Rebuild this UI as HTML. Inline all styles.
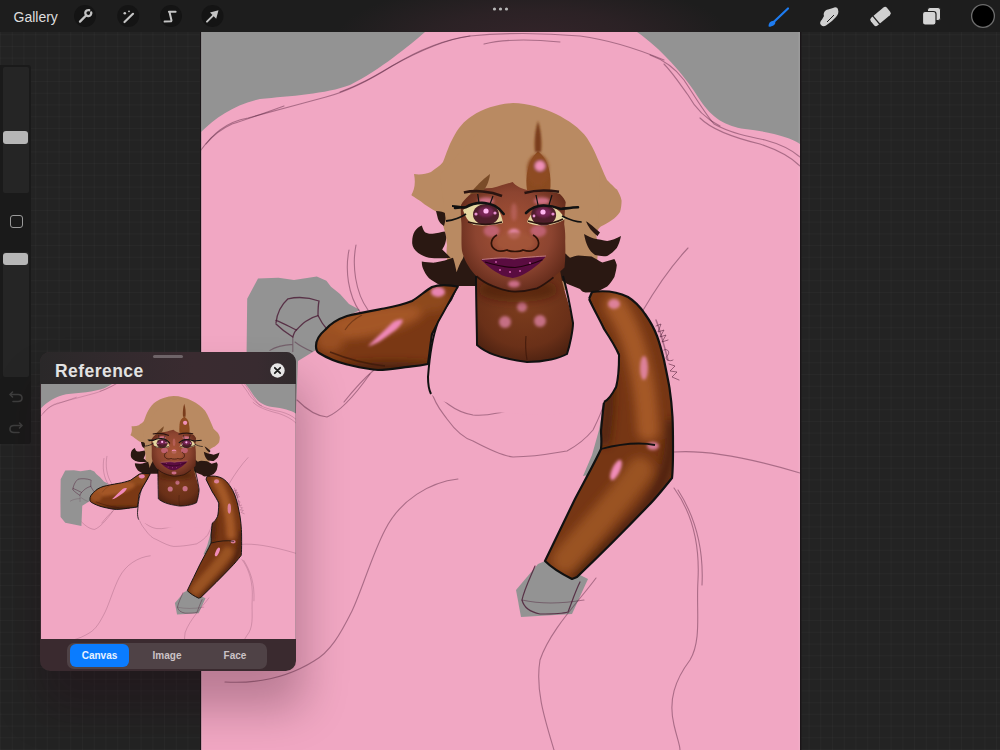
<!DOCTYPE html>
<html><head><meta charset="utf-8">
<style>
html,body{margin:0;padding:0;width:1000px;height:750px;overflow:hidden;background:#262626;font-family:"Liberation Sans",sans-serif;}
#bg{position:absolute;left:0;top:0;width:1000px;height:750px;
background-color:#232323;
background-image:linear-gradient(90deg,rgba(255,255,255,0.025) 1px,transparent 1px),linear-gradient(0deg,rgba(255,255,255,0.025) 1px,transparent 1px);
background-size:11.73px 11.73px;}
#art{position:absolute;left:0;top:0;}
#topbar{position:absolute;left:0;top:0;width:1000px;height:32px;background:#1d1d1d;}
#topbar .tint{position:absolute;left:320px;top:0;width:400px;height:32px;background:radial-gradient(ellipse 200px 60px at 215px 40px,rgba(70,42,52,0.55) 0%,rgba(70,42,52,0.35) 50%,rgba(70,42,52,0) 100%);}
.gal{position:absolute;left:13.5px;top:8.5px;font-size:14px;color:#dedede;}
.ic{position:absolute;top:4px;width:24px;height:24px;border-radius:12px;background:#151515;}
.dots{position:absolute;left:492px;top:7px;}
.dots i{display:inline-block;width:3px;height:3px;border-radius:2px;background:#bbb;margin-right:2px;}
#side{position:absolute;left:0;top:65px;width:30.5px;height:379px;background:#1a1a1a;border-radius:0 3px 3px 0;}
.sl{position:absolute;left:2.5px;width:26.5px;background:#252525;border-radius:2px;}
.sq{position:absolute;left:9.5px;top:150px;width:11px;height:11px;border:1.6px solid #9a9a9a;border-radius:3px;}
.knob{position:absolute;left:3.4px;width:24.8px;height:12.5px;border-radius:3px;background:#b6b6b6;}
#ref{position:absolute;left:40px;top:352px;width:256px;height:319px;background:#3a2a2f;border-radius:10px;overflow:hidden;}
#ref .title{position:absolute;left:15px;top:8.5px;font-size:17.5px;letter-spacing:0.45px;font-weight:bold;color:#e2e2e2;}
#ref .hdr{position:absolute;left:0;top:0;width:256px;height:32px;background:linear-gradient(90deg,#2a2829 0%,#342a2e 35%,#3a2b30 60%,#382b30 85%,#302a2c 100%);}
#ref .handle{position:absolute;left:113px;top:3px;width:30px;height:3px;border-radius:2px;background:#6e6468;}
#ref .close{position:absolute;left:230px;top:11px;width:15px;height:15px;}
#ref .close svg{display:block;}
#ref .mini{position:absolute;left:0;top:32px;display:block;}
#ref .seg{position:absolute;left:27px;top:290.5px;width:200px;height:26px;border-radius:7px;background:#4f4246;}
#ref .seg div{position:absolute;top:0;height:26px;line-height:26px;font-size:10px;font-weight:bold;text-align:center;color:#cbc3c6;}
#ref .seg .on{left:3px;top:1.5px;width:59px;height:23px;line-height:23px;border-radius:6px;background:#0a7cff;color:#e8f2ff;}
#ref .seg .t2{left:70px;width:60px;}
#ref .seg .t3{left:138px;width:60px;}
#shadow{position:absolute;left:40px;top:352px;width:256px;height:319px;border-radius:10px;box-shadow:4px 34px 44px 4px rgba(30,0,15,0.26);}
</style></head><body>
<div id="bg"></div>
<svg id="art" width="1000" height="750" viewBox="0 0 1000 750">
<defs>
<clipPath id="refclip"><rect x="40" y="384" width="256" height="255"/></clipPath>
<g id="artg">
  <linearGradient id="gArmL" x1="0" y1="0" x2="0" y2="1">
    <stop offset="0" stop-color="#8e4a1e"/><stop offset="0.45" stop-color="#9a5222"/><stop offset="1" stop-color="#5c2a12"/>
  </linearGradient>
  <linearGradient id="gArmR" x1="0" y1="0" x2="1" y2="0">
    <stop offset="0" stop-color="#6a3214"/><stop offset="0.45" stop-color="#9c5424"/><stop offset="1" stop-color="#6a3214"/>
  </linearGradient>
  <linearGradient id="gFore" x1="0" y1="0" x2="1" y2="1">
    <stop offset="0" stop-color="#a45a28"/><stop offset="0.5" stop-color="#8a4618"/><stop offset="1" stop-color="#5e2a10"/>
  </linearGradient>
  <radialGradient id="gFace" cx="0.5" cy="0.45" r="0.6">
    <stop offset="0" stop-color="#a85438"/><stop offset="0.6" stop-color="#8c4430"/><stop offset="1" stop-color="#5e2818"/>
  </radialGradient>
  <radialGradient id="gChest" cx="0.5" cy="0.35" r="0.7">
    <stop offset="0" stop-color="#7e3e1e"/><stop offset="0.7" stop-color="#6a3018"/><stop offset="1" stop-color="#4a2010"/>
  </radialGradient>
  <radialGradient id="gPk" cx="0.5" cy="0.5" r="0.5">
    <stop offset="0" stop-color="#f090c0" stop-opacity="1"/><stop offset="0.5" stop-color="#e07aa8" stop-opacity="0.7"/><stop offset="1" stop-color="#d06a90" stop-opacity="0"/>
  </radialGradient>
  <filter id="bl1" x="-50%" y="-50%" width="200%" height="200%"><feGaussianBlur stdDeviation="0.8"/></filter>
  <filter id="bl2" x="-50%" y="-50%" width="200%" height="200%"><feGaussianBlur stdDeviation="1.6"/></filter>
  <filter id="bl4" x="-50%" y="-50%" width="200%" height="200%"><feGaussianBlur stdDeviation="4"/></filter>
  <filter id="bl5" x="-50%" y="-50%" width="200%" height="200%"><feGaussianBlur stdDeviation="5"/></filter>
  <rect x="201" y="32" width="599" height="718" fill="#939393"/>
  <path d="M201,132 C215,118 235,104 260,99 C290,96 326,94 350,85 C380,70 410,45 425,32 L637,32 C660,48 684,74 700,100 C712,118 725,126 745,129 C770,132 790,137 800,144 L800,750 L201,750 Z" fill="#f1a7c3"/>
  <!-- gray patches -->
  <path d="M258,278.4 L278.4,277.8 L294,280 L316.8,276.6 L326.4,280.8 L331,286.8 L340,294 L349,304 L360,310 L340,320 L318,340 L316,350 L298,361 L296,409 L258,401 L247,388 L246.6,351.6 L247.2,298.8 Z" fill="#939393"/>
  <path d="M583,476 L592,455 L599,430 L604,402 L614,398 L614,470 Z" fill="#939393"/>
  <path d="M516,590 L521,617 L572,614 L588,579 L578,574 L545,561 L538,564 L527,577 Z" fill="#939393"/>
  <!-- sketch lines -->
  <g fill="none" stroke="#4a1a34" stroke-width="1.1" stroke-opacity="0.42" stroke-linecap="round">
    <path d="M201,150 C212,135 225,122 248,118 C270,112 300,104 326,97 C345,92 370,80 392,66 C410,56 440,40 470,36"/>
    <path d="M206,144 C214,134 221,129 232,124 C245,120 262,114 284,106"/>
    <path d="M340,92 C360,85 375,76 392,66 C415,52 440,40 470,36 C510,32 545,33 580,36 C610,40 640,50 664,60"/>
    <path d="M484,44 C500,40 520,38 560,42"/>
    <path d="M650,55 C664,60 675,68 684,80 C692,92 704,112 714,124 C730,133 750,137 765,140 C780,144 792,150 800,157"/>
    <path d="M700,118 C712,130 735,138 760,144 C778,150 792,158 800,166"/>
    <path d="M664,64 C672,72 680,84 688,95 C694,106 704,118 720,126"/>
    <path d="M458,479 C430,482 400,500 385,530 C372,555 362,590 352,611 C340,635 330,652 314,661 C290,676 260,684 225,682"/>
    <path d="M297,400 C305,408 315,416 327,417 C340,412 355,395 370,374"/>
    <path d="M344,402 C352,392 362,380 374,370"/>
    <path d="M674,452 C700,450 740,455 800,473"/>
    <path d="M674,488 C690,510 700,540 698,580 C696,610 702,640 690,660 C675,680 668,700 674,725 C677,738 680,745 680,750"/>
    <path d="M678,490 C694,515 704,545 702,585"/>
    <path d="M596,578 C580,600 550,630 540,660 C535,690 545,720 554,750"/>
    <path d="M431,390 C435,405 442,412 447,419 C455,430 463,438 473,441 C490,450 503,456 513,457 C535,457 555,453 567,451 C580,444 588,436 593,430 C598,420 602,412 604,403"/>
    <path d="M431,385 C440,400 455,412 473,415 C490,417 500,411 513,411 C530,411 545,408 565,406 C580,404 590,401 599,398"/>
    <path d="M349,250 C345,270 348,295 360,312"/>
    <path d="M356,245 C352,265 355,292 368,310"/>
    <path stroke-width="1.3" stroke-opacity="0.8" d="M276,322.8 C277,314 280,306 288,298.8 C296,297 308,297 319,301 C318,306 318,312 318,315.6 C320,320 324,326 327.6,330"/>
    <path stroke-width="1.3" stroke-opacity="0.8" d="M276,320.4 C283,323 290,327 296.4,330 C302,324 308,318 318,315.6"/>
    <path stroke-width="1.3" stroke-opacity="0.8" d="M276,324 C282,330 288,334 292.8,337 C294,333 295,331 296.4,330"/>
    <path d="M292.8,337 L292.8,351.6 M270,350.4 C275,347 282,345 292.8,344.4 M295,342 C300,346 306,349 312,351.6"/>
    
    <path d="M688,248 C672,265 656,288 642,312"/>
    <path d="M535,566 C530,578 524,590 522,600 C524,608 530,612 540,614 C552,614 562,614 568,612 C572,602 575,592 580,582" stroke-width="1.2" stroke-opacity="0.8"/>
    <path d="M522,600 C540,604 560,604 584,600"/>
    <path d="M656,326 L661,324 L658,332 L664,330 L660,337 L666,335 L662,342 L668,340 M664,350 C667,348 671,352 667,356 C664,360 670,362 673,360 M669,364 L675,366 L670,371 L677,372 L672,377 L679,380" stroke-width="0.9" stroke-opacity="0.6"/>
    <path d="M656,320 C660,330 664,345 668,360" stroke-width="1.5"/>
  </g>
  <!-- tan hair mass -->
  <path d="M437,212 C431,209 425,205 421,201.6 C416,198 412,196 411.4,195 C414,190 416,184 414,174 C420,175 426,174 431,172 C436,168 440,166 443,162 C447,152 449,145 453,138 C458,128 464,121 472,116 C484,108 498,104 513,103 C528,103 543,108 556,114 C568,120 580,128 587,138 C595,150 600,165 607,180 C612,185 615,188 617,189.6 C619,193 621,197 621.6,200.8 C621.5,205 621,209 620,212 C617,216 615,218 612,220 C608,223 604,225 600.8,226.4 C598,229 597,231 596,234.4 C600,250 598,275 585,290 L460,290 C450,280 445,260 447,245 C446,232 442,220 437,212 Z" fill="#b98a62"/>
  <!-- left dark curls -->
  <path d="M421.8,225.4 C423,229 424,231.5 425.4,232.6 C428,233.8 430,234 432.6,233.8 C437,233 441,232 444.6,231.4 C446,234 446.5,238 445.8,241 C445,245 443.5,247.5 442.2,249.4 C445,252 448,255 450.6,257.8 C443,258.5 436,258.5 429,257.8 C424,256.5 421,255 418.2,253 C414.5,250 412.5,247 412.2,243.4 C412,238 413,234 414.6,231.4 C416.5,228.5 419,226.5 421.8,225.4 Z" fill="#2a1812"/>
  
  <path d="M421.8,261.4 C426,262 431,262.8 435,262.6 C442,261.5 448,259.5 453,257.8 C454.5,262 455.5,267 456.6,272.2 C458.5,267 460.5,262 462.6,259 C464,255 466,252 468,250 L500,262 L500,291 C490,289 480,287.5 471,286.6 C466,287.5 461,288 456.6,287.8 C451,287.5 446,286.5 441,285.4 C436,283 432,280.5 429,278.2 C426,275 424.5,272 423,268.6 C422,266 421.8,263.5 421.8,261.4 Z" fill="#2a1812"/>
  <path d="M436,211 C440,211 444,212 447,214 C446,218 445,222 444,226 C441,224 439,222 438,219 Z" fill="#2a1812"/>
  <!-- right dark curls -->
  <path d="M585.6,220.6 C590,224 595,228 600,232.6 C599,234 598,235 597.6,236.2 C592,232 588,227 585.6,220.6 Z" fill="#2a1812"/>
  <path d="M584,234 C588,236 591,237.5 594,238.6 C599,239.5 603,240.5 607.2,241 C612,240 616,238.8 621,236 C620,241 618.5,245 616.8,248 C614,251 611,254 607.2,256 C603,256.5 599,256 595,255 C592,253 589.5,250 588,247 C586,243 585,239 584,234 Z" fill="#2a1812"/>
  <path d="M570,257.8 C573,256.5 576,255.8 578.4,255.4 C583,255.8 587,256 591.6,256.6 C595,258.5 599,261 602.4,262.6 C606.5,261.5 610.5,260.3 614.4,259 C615.5,261 616.3,263 616.8,265 C616.5,269 615.5,273 614.4,277 C612,281 610,284 607.2,286.6 C604,288.5 601,290 597.6,291.4 C593.5,292 589.5,292.5 585.6,292.6 C582,291.5 578,290.5 574.8,289 C571,286.5 567,284 564,281.8 C561,280 558.5,278.5 556.8,277 L530,280 L530,262 L560,250 C564,252 567,255 570,257.8 Z" fill="#2a1812"/>
  <!-- neck / chest skin -->
  <path d="M476,270 C490,268 540,268 560,270 C563,290 570,305 573,323 C572,340 570,350 567,354 C555,360 540,362 527,362 C510,361 497,358 492,355 C485,352 478,349 477,345 Z" fill="url(#gChest)"/>
  <g filter="url(#bl2)">
    <ellipse cx="505" cy="322" rx="6" ry="6" fill="#e888b0" fill-opacity="0.7"/>
    <ellipse cx="522" cy="307" rx="5" ry="5" fill="#e888b0" fill-opacity="0.7"/>
    <ellipse cx="540" cy="321" rx="6" ry="6" fill="#e888b0" fill-opacity="0.7"/>
  </g>
  <ellipse cx="518" cy="290" rx="40" ry="12" fill="#3e1a0a" fill-opacity="0.5" filter="url(#bl5)"/>
  <path d="M526,336 C525,346 526,354 527,360" fill="none" stroke="#3a1608" stroke-width="1.2" stroke-opacity="0.7"/>
  <!-- face -->
  <path d="M461,205 C460.5,212 461,218 461.4,223 C461.8,232 461,244 462,251 C464,260 470,270 476.5,276.3 C482,281 487,284 493,286.2 C500,289 508,291.5 515,291.7 C523,291.5 531,290 537,288.4 C544,285 549,281 553.5,277.4 C558,273 562,270 564.5,267.5 C565.5,258 565.5,250 565.2,241 C565.5,235 565,229 564.2,224.2 C564.5,215 565,208 566,200 C558,188 540,182 515,182 C490,182 470,190 461,205 Z" fill="url(#gFace)"/>
  <path d="M476.5,276.3 C482,281 487,284 493,286.2 C500,289 508,291.5 515,291.7 C523,291.5 531,290 537,288.4 C544,285 549,281 553.5,277.4" fill="none" stroke="#1e0e0a" stroke-width="1.8" stroke-opacity="0.85"/>
  <!-- bangs -->
  <path d="M446,222 C452,210 458,202 467,193 C476,190 484,188 492,188 C500,186 506,184 512.7,182 C516,186 520,188 527,190 C538,191 552,191 560,194 C566,200 568,206 570,218 L598,224 L600,170 L560,130 L480,130 L440,175 Z" fill="#b98a62"/>
  <path d="M470,194 C476,186 482,180 490,174 C489,182 486,189 481,193 Z" fill="#7a4c28"/>
  <path d="M527,190 C525,178 527,162 538,151 C549,160 552,176 550,192 Z" fill="#8a4a20"/>
  <g filter="url(#bl2)"><ellipse cx="538" cy="170" rx="11" ry="16" fill="#8e4c22"/><ellipse cx="540" cy="166" rx="5" ry="5" fill="#f090b8"/></g>
  <path d="M538,121 C541,130 542,142 541,152 L535,152 C534,142 535,130 538,121 Z" fill="#7a3e1c" filter="url(#bl1)"/>
  <!-- left arm -->
  <clipPath id="cLA"><path d="M460,287 C450,285 440,284 432,287 C425,291 419,297 412,301 C402,305 392,307 384,308.5 C370,311 358,313 347,316 C338,319 331,323 325,330 C319,335 316,340 316,346 C316,350 317,352 319,353 C327,358 337,362 347,364.5 C358,367 368,369.5 378,370 C390,370 402,367.5 412,366.4 C418,365.8 423,365 428,364 C430,350 431,340 432,334 C438,322 444,312 452,300 Z"/></clipPath>
  <clipPath id="cRA"><path d="M592,292 C606,290 618,292 628,297 C636,302 641,308 645,314 C650,321 654,328 657,336 C660,344 662,352 664,360 C666,370 668,379 669.5,388 C671,398 672,408 672.5,417 C673,428 673,438 673,446 C673,458 673,470 672,478 C664,488 656,498 649,505 C625,530 600,555 577,577 C572,579 572,579 572,579 C562,574 552,568 545,561 C555,540 565,520 575,499 C585,480 595,462 601,449 C602,440 601,435 601,431 C602,420 603,410 604,402 C608,395 612,392 616,387 C618,375 619,365 619,355 C614,345 609,338 604,329 C598,318 593,308 589,299 Z"/></clipPath>
  <g clip-path="url(#cLA)">
    <rect x="300" y="270" width="170" height="110" fill="#7a3814"/>
    <g filter="url(#bl4)">
      <ellipse cx="370" cy="322" rx="55" ry="14" fill="#a45626" transform="rotate(-12 370 322)"/>
      <ellipse cx="330" cy="340" rx="14" ry="12" fill="#9a5020"/>
      <ellipse cx="390" cy="372" rx="70" ry="10" fill="#4e220c"/>
      <ellipse cx="430" cy="300" rx="20" ry="12" fill="#8e4a1e"/>
    </g>
    <g filter="url(#bl2)">
      <path d="M403,320 C400,319 396,320 393,322 C385,330 376,338 368,346 C375,345 382,340 390,334 C396,330 401,326 403,320 Z" fill="#f088b8"/>
      <ellipse cx="438" cy="292" rx="7" ry="5" fill="#e884b0"/>
    </g>
  </g>
  <path d="M460,287 C450,285 440,284 432,287 C425,291 419,297 412,301 C402,305 392,307 384,308.5 C370,311 358,313 347,316 C338,319 331,323 325,330 C319,335 316,340 316,346 C316,350 317,352 319,353 C327,358 337,362 347,364.5 C358,367 368,369.5 378,370 C390,370 402,367.5 412,366.4 C418,365.8 423,365 428,364 C430,350 431,340 432,334 C438,322 444,312 452,300 Z" fill="none" stroke="#111" stroke-width="2.2" stroke-linejoin="round"/>
  <path d="M330,352 C345,358 365,364 385,366" fill="none" stroke="#3a180a" stroke-width="1.5" stroke-opacity="0.7"/>
  <path d="M345,330 C350,322 356,318 362,315" fill="none" stroke="#5a2a10" stroke-width="1.2" stroke-opacity="0.6"/>
  <!-- right arm -->
  <g clip-path="url(#cRA)">
    <rect x="540" y="285" width="140" height="300" fill="#763614"/>
    <g filter="url(#bl5)">
      <path d="M615,305 C632,330 645,370 648,430" stroke="#a45828" stroke-width="22" fill="none" stroke-linecap="round"/>
      <path d="M640,470 C620,500 590,530 565,560" stroke="#9a5224" stroke-width="26" fill="none" stroke-linecap="round"/>
      <path d="M604,340 C612,380 608,420 604,445" stroke="#4e200c" stroke-width="10" fill="none"/>
      <path d="M672,420 C672,450 670,480 640,515 C610,545 590,565 575,580" stroke="#4e200c" stroke-width="12" fill="none"/>
    </g>
    <g filter="url(#bl2)">
      <ellipse cx="614" cy="304" rx="6" ry="5" fill="#ec8cb6" fill-opacity="0.8"/>
      <ellipse cx="644" cy="368" rx="4" ry="12" fill="#ec8cb6" fill-opacity="0.8"/>
      <ellipse cx="616" cy="470" rx="4" ry="11" fill="#f08cb8" transform="rotate(25 616 470)"/>
      <ellipse cx="653" cy="446" rx="6" ry="4" fill="#ec8cb6" fill-opacity="0.8"/>
    </g>
  </g>
  <path d="M592,292 C606,290 618,292 628,297 C636,302 641,308 645,314 C650,321 654,328 657,336 C660,344 662,352 664,360 C666,370 668,379 669.5,388 C671,398 672,408 672.5,417 C673,428 673,438 673,446 C673,458 673,470 672,478 C664,488 656,498 649,505 C625,530 600,555 577,577 C572,579 572,579 572,579 C562,574 552,568 545,561 C555,540 565,520 575,499 C585,480 595,462 601,449 C602,440 601,435 601,431 C602,420 603,410 604,402 C608,395 612,392 616,387 C618,375 619,365 619,355 C614,345 609,338 604,329 C598,318 593,308 589,299 Z" fill="none" stroke="#111" stroke-width="2.2" stroke-linejoin="round"/>
  <path d="M601,449 C620,444 640,442 655,445" fill="none" stroke="#111" stroke-width="1.8"/>
  <!-- tank top -->
  <path d="M458.3,286 L476,286 L477,345 C485,352 497,358 527,362 C545,362 560,358 567,354 C570,345 573,330 573,323 C570,305 567,293 565,283 L580,289 L589,299 C594,310 600,320 604,329 C610,338 616,348 619,355 C619,370 618,380 616,387 C612,395 608,400 604,402 C590,412 560,416 520,414 C480,412 440,405 430,393 C428,385 427,380 428,377 C430,360 431,345 433,337 C438,320 445,310 452,300 Z" fill="#f1a7c3"/>
  <path d="M458.3,286 C452,296 445,310 438,322 C433,335 430,350 428,377 C428,385 429,390 431,394" fill="none" stroke="#111" stroke-width="2"/>
  <path d="M476,276 C476,300 477,330 477,345 C485,352 497,358 527,362 C545,362 560,358 567,354 C570,345 573,330 573,323 C570,305 567,290 563,276" fill="none" stroke="#111" stroke-width="2"/>
  <path d="M589,299 C594,310 600,320 604,329 C610,338 616,348 619,355 C619,370 618,380 616,387 C612,395 608,400 604,402" fill="none" stroke="#111" stroke-width="2"/>
  <!-- face details -->
  <g>
    <g filter="url(#bl2)">
      <ellipse cx="486" cy="201" rx="8" ry="3.5" fill="#e07a98" fill-opacity="0.8"/>
      <ellipse cx="542" cy="201" rx="8" ry="3.5" fill="#e07a98" fill-opacity="0.8"/>
      <ellipse cx="514" cy="212" rx="3" ry="9" fill="#c46a6a" fill-opacity="0.6"/>
      <ellipse cx="514" cy="234" rx="6" ry="5" fill="#f090b8"/>
      <ellipse cx="491.6" cy="231" rx="8" ry="6" fill="#d87098" fill-opacity="0.6"/>
      <ellipse cx="538.4" cy="231" rx="8" ry="6" fill="#d87098" fill-opacity="0.6"/>
      <ellipse cx="514" cy="284" rx="6" ry="3.5" fill="#e07aa0" fill-opacity="0.8"/>
      
    </g>
    <path d="M463.9,192.5 C475,190 490,191 502,196" fill="none" stroke="#2a1410" stroke-width="2.6"/>
    <path d="M524.5,193 C535,190 548,190 559,191.7" fill="none" stroke="#2a1410" stroke-width="2.6"/>
    <path d="M463,210 C470,204 479,202 488,203 C496,205 501,211 503,223 C496,225 485,226 474,225 C468,222 465,216 463,210 Z" fill="#e6d6a0"/>
    <path d="M527,222 C531,212 538,206.5 546,206 C555,206.5 561,211 565,219 C559,223 551,225.5 542,225.5 C535,225.5 530,224 527,222 Z" fill="#e6d6a0"/>
    <ellipse cx="486" cy="214.5" rx="13" ry="10.5" fill="#4e1e2a"/><ellipse cx="486" cy="212" rx="8" ry="5" fill="#8a2a6a" fill-opacity="0.7" filter="url(#bl1)"/>
    <ellipse cx="543.6" cy="215" rx="12.5" ry="10.5" fill="#4e1e2a"/><ellipse cx="543.6" cy="212.5" rx="8" ry="5" fill="#8a2a6a" fill-opacity="0.7" filter="url(#bl1)"/>
    <path d="M455,208 C460,207 463,208 465.6,207.3 C472,203.5 478,202.5 484.7,203 C492,204 498,206 503.7,214" fill="none" stroke="#111" stroke-width="2.6" stroke-linecap="round"/>
    <path d="M526,213 C532,207 538,205.5 543.6,205.5 C550,205.5 556,207 561,209 C566,208.5 572,207.5 578,207.3" fill="none" stroke="#111" stroke-width="2.6" stroke-linecap="round"/>
    <path d="M446,221 C454,220 460,218 466,214" fill="none" stroke="#111" stroke-width="1.8"/>
    <path d="M452,206 C456,206 461,207 465.6,207.3" fill="none" stroke="#111" stroke-width="1.8"/>
    <path d="M562,216 C568,219 575,222 581.7,222" fill="none" stroke="#111" stroke-width="1.6"/>
    <path d="M477.7,194 L479,203 M493,196 L490,204 M536,195 L538,205 M552,195 L549,205" stroke="#111" stroke-width="1.2"/>
    <path d="M468,222 C478,225 492,225.5 502,222" fill="none" stroke="#2a1410" stroke-width="1.8"/>
    <path d="M528,221 C540,225 552,224.5 563,219" fill="none" stroke="#2a1410" stroke-width="1.8"/>
    <circle cx="486" cy="211" r="2.6" fill="#ffb8f0"/>
    <circle cx="476" cy="214" r="1.6" fill="#e890d0"/>
    <circle cx="495" cy="213" r="1.6" fill="#e890d0"/>
    <circle cx="543" cy="212" r="2.6" fill="#ffb8f0"/>
    <circle cx="553" cy="214" r="1.6" fill="#e890d0"/>
    <circle cx="534" cy="216" r="1.4" fill="#e890d0"/>
    <ellipse cx="515" cy="242" rx="19" ry="10" fill="#a4563a" fill-opacity="0.75" filter="url(#bl2)"/>
    
    <path d="M497,235 C490,239 489,247 497,250.5 C501,252 504,251 507,250 C510,252 520,252 523,250 C526,251 529,252 533,250.5 C541,247 540,239 533,235" fill="none" stroke="#2e1208" stroke-width="1.7"/>
    <path d="M481,259.8 C485,259.5 489,259.5 493,259.3 C498,258.5 502,258 506,258 C510,258.5 512,259.3 515,259.3 C519,258.5 522,258 526,258 C533,257.5 540,257 545.8,256.5 C543,260 540,263 537,265.3 C533,268.5 530,271 526,273 C522,275.5 517,277.5 512.8,278 C509,277.5 505,276.5 501.8,275.2 C498,273 494,271 490.8,268.6 C487,265.5 484,262.5 481,259.8 Z" fill="#5a0c40"/>
    <path d="M485,262 C495,265 505,267.5 515,267.5 C525,266.5 535,263 542.5,259.8" fill="none" stroke="#22020e" stroke-width="1.2"/>
    <path d="M482,259.5 C492,258.5 502,257 514,258.8 C526,257 538,256.5 546,256" fill="none" stroke="#d08aa0" stroke-width="0.9" stroke-opacity="0.8"/>
    <g fill="#d060b0"><circle cx="500" cy="270" r="1"/><circle cx="510" cy="272" r="1.1"/><circle cx="520" cy="271" r="1"/><circle cx="496" cy="262" r="0.9"/><circle cx="530" cy="263" r="0.9"/></g>
  </g>
  <!-- highlights body -->
  <g>
    
    
    
    
    
    
    
    
    
  </g>
</g>

</defs>
<use href="#artg"/>
<rect x="199.8" y="32" width="1.4" height="718" fill="#1a1518"/>
<rect x="800" y="32" width="1.4" height="718" fill="#1a1518"/>
<rect x="201" y="32" width="1.2" height="718" fill="#ffffff" fill-opacity="0.12"/>
<rect x="798.6" y="32" width="1.2" height="718" fill="#ffffff" fill-opacity="0.1"/>
</svg>
<div id="topbar"><div class="tint"></div>
  <div class="gal">Gallery</div>
  <svg style="position:absolute;left:0;top:0" width="1000" height="32" viewBox="0 0 1000 32">
    <g fill="#141414"><circle cx="85" cy="16" r="11"/><circle cx="128.2" cy="16" r="11"/><circle cx="171" cy="16" r="11"/><circle cx="212.5" cy="16" r="11"/></g>
    <g stroke="#c4c4c4" fill="none" stroke-linecap="round">
      <path d="M80,21.6 L86.3,15.3" stroke-width="2.3"/>
      <path d="M91.2,12.3 A3,3 0 1 1 89.2,10.2" stroke-width="2.3" fill="none"/>
      <path d="M124.5,22 L133,13.8" stroke-width="2.2"/>
      <path d="M168.9,11.7 L175.6,11.7 M169.5,12 L171.5,20.5 M164.6,21.6 L171.2,21.2" stroke-width="2"/>
      <path d="M207,21.6 L216,12.6" stroke-width="2"/>
    </g>
    <g fill="#c4c4c4">
      <circle cx="124.8" cy="13.3" r="1.3"/><circle cx="129" cy="11.3" r="0.9"/>
      <path d="M218.5,10.3 L210,12.5 L216.2,18.8 Z"/>
    </g>
    <path d="M770,25.5 L788,8.5" stroke="#1e7cf0" stroke-width="2.2" stroke-linecap="round"/>
    <path d="M768.5,26.5 C768.5,23 770.5,21 773.5,20.8 L775.5,22.8 C775,25.5 772,26.8 768.5,26.5 Z" fill="#1e7cf0"/>
    <path d="M821,25 C819.5,23.5 820,21.5 822,19.5 L824,16 C823,13 825,10 828,9.5 L833,8 C835,6.5 837.5,7 838,9.5 C839,12 838,15 836,17 L832,21 L826,25.5 C824.5,26.5 822.5,26.5 821,25 Z" fill="#d0d0d0"/>
    <path d="M827,22 L834,15" stroke="#1e1e1e" stroke-width="1"/>
    <g transform="translate(880.5,16.5) rotate(-40)"><rect x="-10.5" y="-5" width="21" height="10" rx="2.5" fill="#d0d0d0"/><path d="M-5.5,-5.5 L-5.5,5.5" stroke="#1e1e1e" stroke-width="1.2"/></g>
    <rect x="927.5" y="7.5" width="13" height="13" rx="2.5" fill="#d4d4d4" stroke="#1e1e1e" stroke-width="1"/>
    <rect x="922.5" y="11.5" width="13.5" height="13.5" rx="2.5" fill="#d4d4d4" stroke="#1e1e1e" stroke-width="1.2"/>
    <circle cx="983" cy="16" r="11.4" fill="#000" stroke="#6e6e6e" stroke-width="1.3"/>
    <g fill="#b8b8b8"><circle cx="494.5" cy="9" r="1.6"/><circle cx="500.5" cy="9" r="1.6"/><circle cx="506.5" cy="9" r="1.6"/></g>
  </svg>
</div>
<div id="side">
  <div class="sl" style="top:1.5px;height:126px"></div>
  <div class="knob" style="top:66px"></div>
  <div class="sq"></div>
  <div class="sl" style="top:187px;height:125px"></div>
  <div class="knob" style="top:187.6px"></div>
  <svg style="position:absolute;left:0;top:0" width="31" height="383" viewBox="0 63 31 383">
    <g fill="none" stroke="#3e3e3e" stroke-width="1.6" stroke-linecap="round" stroke-linejoin="round">
      <path d="M12.5,390 L10,392.5 L12.5,395"/>
      <path d="M10.5,392.5 L18,392.5 C20.5,392.5 22,394 22,396 C22,398 20.5,399.5 18,399.5 L13,399.5"/>
      <path d="M19.5,421 L22,423.5 L19.5,426"/>
      <path d="M21.5,423.5 L14,423.5 C11.5,423.5 10,425 10,427 C10,429 11.5,430.5 14,430.5 L19,430.5"/>
    </g>
  </svg>
</div>
<div id="shadow"></div>
<div id="ref">
  <div class="hdr"></div>
  <div class="handle"></div>
  <div class="title">Reference</div>
  <div class="close"><svg width="15" height="15" viewBox="0 0 15 15"><circle cx="7.5" cy="7.5" r="7.2" fill="#e6e6e6"/><path d="M4.8,4.8 L10.2,10.2 M10.2,4.8 L4.8,10.2" stroke="#1e1e1e" stroke-width="1.8" stroke-linecap="round"/></svg></div>
  <svg class="mini" width="256" height="255" viewBox="40 384 256 255"><use href="#artg" transform="translate(-44.4,352.2) scale(0.425)"/></svg>
  <div class="seg">
    <div class="on">Canvas</div>
    <div class="t2">Image</div>
    <div class="t3">Face</div>
  </div>
</div>
</body></html>
